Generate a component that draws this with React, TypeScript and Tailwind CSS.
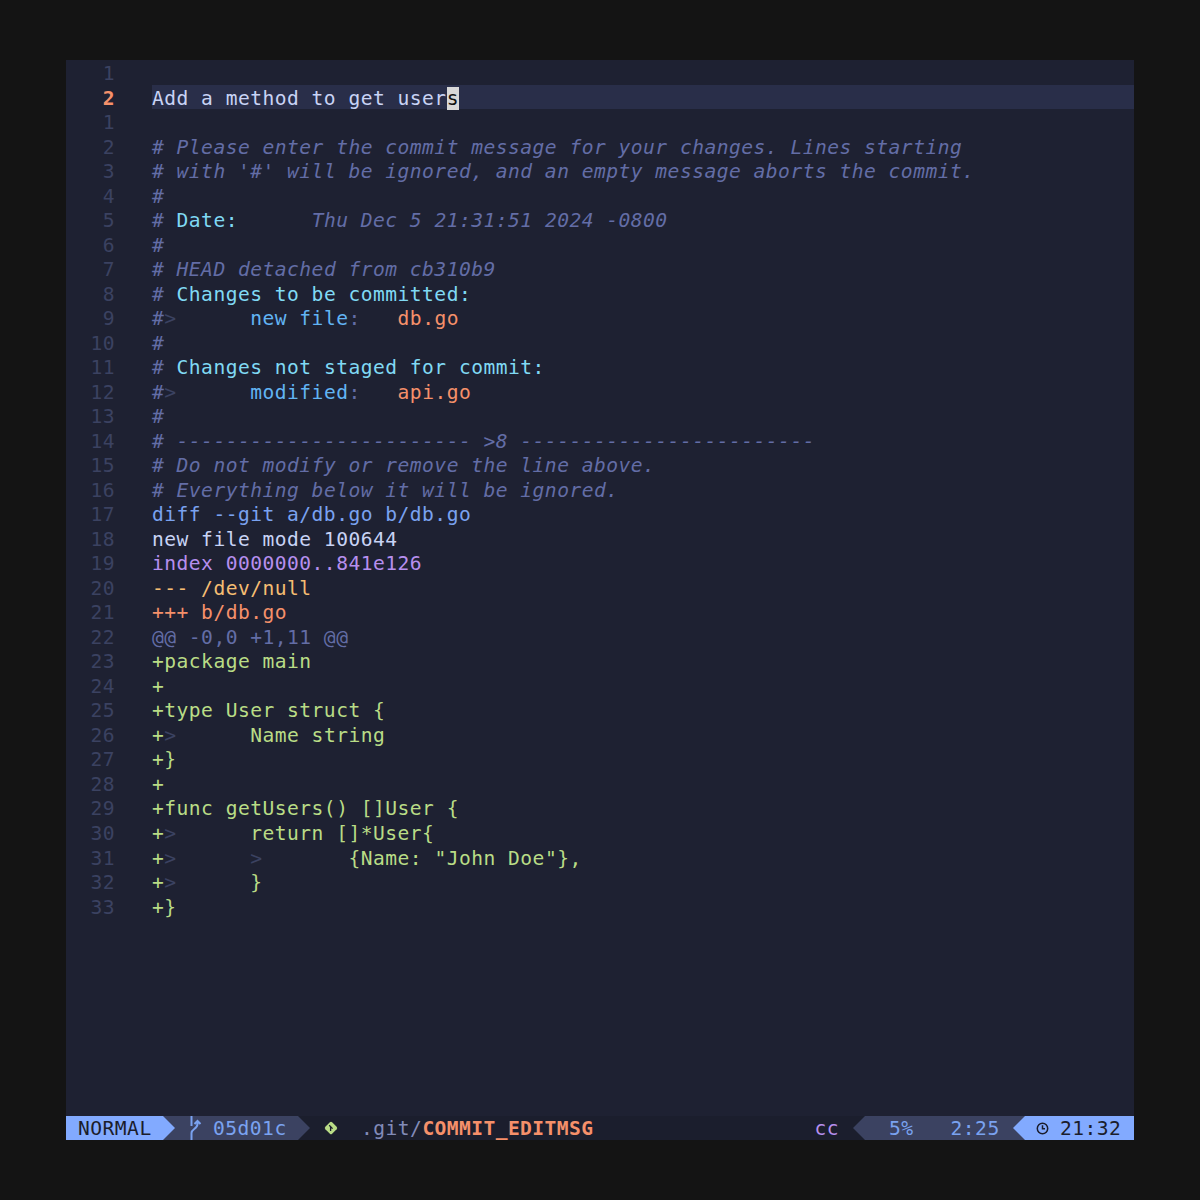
type Part = [string, string?];

const COMMENT = "text-[#636da6]";
const NOTE = "text-[#636da6] italic";
const DIM = "text-[#3b4261]";
const CYAN = "text-[#80d9f4]";
const BLUE = "text-[#62b4f4]";
const ORANGE = "text-[#f5906a]";
const GREEN = "text-[#b9dc86]";

const message: Part[][] = [
  [],
  [["# ", COMMENT], ["Please enter the commit message for your changes. Lines starting", NOTE]],
  [["# ", COMMENT], ["with '#' will be ignored, and an empty message aborts the commit.", NOTE]],
  [["#", COMMENT]],
  [["# ", COMMENT], ["Date:", CYAN], ["      ", ""], ["Thu Dec 5 21:31:51 2024 -0800", NOTE]],
  [["#", COMMENT]],
  [["# ", COMMENT], ["HEAD detached from cb310b9", NOTE]],
  [["# ", COMMENT], ["Changes to be committed:", CYAN]],
  [["#", COMMENT], [">", DIM], ["      ", ""], ["new file", BLUE], [":", COMMENT], ["   ", ""], ["db.go", ORANGE]],
  [["#", COMMENT]],
  [["# ", COMMENT], ["Changes not staged for commit:", CYAN]],
  [["#", COMMENT], [">", DIM], ["      ", ""], ["modified", BLUE], [":", COMMENT], ["   ", ""], ["api.go", ORANGE]],
  [["#", COMMENT]],
  [["# ", COMMENT], ["------------------------ >8 ------------------------", NOTE]],
  [["# ", COMMENT], ["Do not modify or remove the line above.", NOTE]],
  [["# ", COMMENT], ["Everything below it will be ignored.", NOTE]],
  [["diff --git a/db.go b/db.go", "text-[#7aa2f0]"]],
  [["new file mode 100644", "text-[#c8d3f5]"]],
  [["index 0000000..841e126", "text-[#b68fee]"]],
  [["--- /dev/null", "text-[#f5bd72]"]],
  [["+++ b/db.go", ORANGE]],
  [["@@ -0,0 +1,11 @@", COMMENT]],
  [["+package main", GREEN]],
  [["+", GREEN]],
  [["+type User struct {", GREEN]],
  [["+", GREEN], [">", DIM], ["      ", ""], ["Name string", GREEN]],
  [["+}", GREEN]],
  [["+", GREEN]],
  [["+func getUsers() []User {", GREEN]],
  [["+", GREEN], [">", DIM], ["      ", ""], ["return []*User{", GREEN]],
  [["+", GREEN], [">", DIM], ["      ", ""], [">", DIM], ["       ", ""], ['{Name: "John Doe"},', GREEN]],
  [["+", GREEN], [">", DIM], ["      ", ""], ["}", GREEN]],
  [["+}", GREEN]],
];

function Row({ num, current, children }: { num: number; current?: boolean; children?: React.ReactNode }) {
  return (
    <div className="flex h-[24.53px] leading-[27px]">
      <div className={`w-[49px] text-right ${current ? "font-bold text-[#f5906a]" : "text-[#3b4261]"}`}>{num}</div>
      <div className={`ml-[37px] flex-1 whitespace-pre ${current ? "bg-[#292e49]" : ""}`}>{children}</div>
    </div>
  );
}

function Arrow({ dir, from, to }: { dir: "right" | "left"; from: string; to: string }) {
  // powerline separator: filled triangle on top of the next segment's colour
  return (
    <svg width="12" height="24" viewBox="0 0 12 24" className="shrink-0" preserveAspectRatio="none">
      <rect width="12" height="24" fill={to} />
      <path d={dir === "right" ? "M0 0 L12 12 L0 24 Z" : "M12 0 L0 12 L12 24 Z"} fill={from} />
    </svg>
  );
}

export default function App() {
  return (
    <div className="flex h-[1200px] w-[1200px] items-center justify-center bg-[#141414]">
      <div className="flex h-[1080px] w-[1068px] flex-col bg-[#1e2132] font-['DejaVu_Sans_Mono',monospace] text-[19.6px] tracking-[0.48px]">
        <div className="flex-1">
          <Row num={1} />
          <Row num={2} current>
            <span className="text-[#c8d3f5]">Add a method to get user</span>
            <span className="bg-[#d8d8d8] text-[#111111]">s</span>
          </Row>
          {message.map((parts, i) => (
            <Row key={i} num={i + 1}>
              {parts.map(([text, color], j) => (
                <span key={j} className={color}>
                  {text}
                </span>
              ))}
            </Row>
          ))}
        </div>

        <div className="flex h-6 items-start bg-[#1b1e2d] leading-[26px]">
          <div className="h-6 w-[97px] bg-[#82aaff] pl-3 text-[#1b1d2b]">NORMAL</div>
          <Arrow dir="right" from="#82aaff" to="#3b4261" />
          <div className="flex h-6 w-[123px] items-start bg-[#3b4261] pl-[15px] text-[#7aa2f0]">
            <svg width="12" height="24" viewBox="0 0 12 24" fill="none" stroke="#7aa2f0" strokeWidth="2" className="mr-[11px] shrink-0">
              <path d="M1.5 0 V10 M1.5 24 V17 C1.5 13 7.5 13 7.5 8 V5 M4.5 8 L7.5 5 L10.5 8" />
            </svg>
            05d01c
          </div>
          <Arrow dir="right" from="#3b4261" to="#1b1e2d" />
          <svg width="14" height="14" viewBox="0 0 14 14" className="ml-[14px] shrink-0 self-center">
            <rect x="2.2" y="2.2" width="9.6" height="9.6" rx="1.6" transform="rotate(45 7 7)" fill="#b9dc86" />
            <path d="M5.2 4.2 L8.6 7.6 M6.6 5.6 V10" stroke="#1b1e2d" strokeWidth="1.3" fill="none" />
          </svg>
          <div className="ml-[23px] text-[#828bb8]">.git/</div>
          <div className="font-bold tracking-[0.42px] text-[#f5906a]">COMMIT_EDITMSG</div>
          <div className="ml-auto mr-[14px] text-[#b68fee]">cc</div>
          <Arrow dir="left" from="#3b4261" to="#1b1e2d" />
          <div className="flex h-6 w-[148px] items-start bg-[#3b4261] pl-[24px] text-[#7aa2f0]">
            <span>5%</span>
            <span className="ml-[37px]">2:25</span>
          </div>
          <Arrow dir="left" from="#82aaff" to="#3b4261" />
          <div className="flex h-6 w-[109px] items-center bg-[#82aaff] pl-[11px] text-[#1b1d2b]">
            <svg width="13" height="13" viewBox="0 0 13 13" fill="none" stroke="#1b1d2b" strokeWidth="1.5" className="mr-[11px] mt-[1px] shrink-0">
              <circle cx="6.5" cy="6.5" r="5.2" />
              <path d="M6.5 3.2 V6.8 H9" />
            </svg>
            <span className="mt-[2px]">21:32</span>
          </div>
        </div>
      </div>
    </div>
  );
}
